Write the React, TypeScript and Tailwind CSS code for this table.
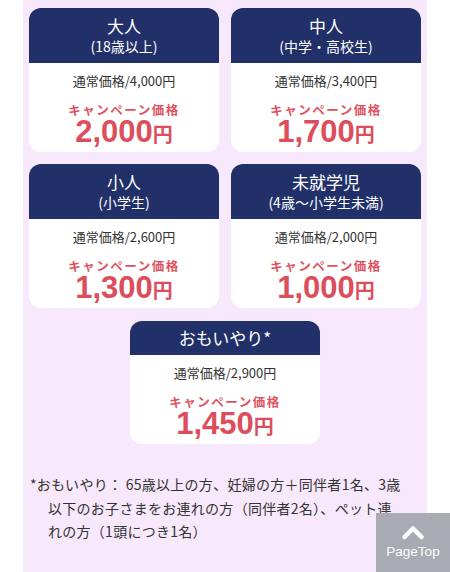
import React from "react"

type Price = {
    title: string
    sub?: string
    normal: string
    campaign: string
}

const prices: Price[] = [
    { title: "大人", sub: "(18歳以上)", normal: "通常価格/4,000円", campaign: "2,000" },
    { title: "中人", sub: "(中学・高校生)", normal: "通常価格/3,400円", campaign: "1,700" },
    { title: "小人", sub: "(小学生)", normal: "通常価格/2,600円", campaign: "1,300" },
    { title: "未就学児", sub: "(4歳〜小学生未満)", normal: "通常価格/2,000円", campaign: "1,000" },
]

const omoiyari: Price = { title: "おもいやり*", normal: "通常価格/2,900円", campaign: "1,450" }

function PriceCard({ p }: { p: Price }) {
    return (
        <div className="w-full overflow-hidden rounded-xl bg-white">
            {/* Header */}
            <div className={`flex flex-col items-center justify-center bg-[#22306a] text-white ${p.sub ? "h-[55px]" : "h-[34px]"}`}>
                <div className="text-[17px] leading-[22px]">{p.title}</div>
                {p.sub && <div className="text-[14px] leading-[19px]">{p.sub}</div>}
            </div>
            <div className="flex h-[89px] flex-col items-center pt-[9px]">
                <div className="text-[13px] leading-[18px] text-[#333]">{p.normal}</div>
                <div className="mt-[13px] text-[12.5px] font-bold leading-[14px] tracking-[0.12em] text-[#e05260]">
                    キャンペーン価格
                </div>
                <div className="flex items-baseline font-bold leading-[29px] text-[#dc4e5c]">
                    <span className="font-['Liberation_Sans','Noto_Sans_CJK_JP',sans-serif] text-[31px]">{p.campaign}</span>
                    <span className="text-[20px]">円</span>
                </div>
            </div>
        </div>
    )
}

export default function App() {
    return (
        <div className="relative h-[572px] w-[450px] overflow-hidden bg-white font-['Noto_Sans_CJK_JP','Noto_Sans',sans-serif]">
            <div className="mx-[23px] h-full bg-[#f8e8fb] px-[6px] pt-2">
                <div className="grid grid-cols-2 gap-3">
                    {prices.map((p) => (
                        <PriceCard key={p.title} p={p} />
                    ))}
                </div>
                <div className="mt-[13px] flex justify-center">
                    <div className="w-[190px]">
                        <PriceCard p={omoiyari} />
                    </div>
                </div>

                {/* Note */}
                <p className="mt-[29px] whitespace-nowrap pl-[19px] -indent-[18px] text-[14px] leading-[23.5px] tracking-[0.02em] text-[#333]">
                    *おもいやり： 65歳以上の方、妊婦の方＋同伴者1名、3歳
                    <br />
                    以下のお子さまをお連れの方（同伴者2名）、ペット連
                    <br />
                    れの方（1頭につき1名）
                </p>
            </div>

            {/* Page top button */}
            <button className="absolute bottom-0 right-0 flex h-[59px] w-[74px] flex-col items-center justify-center bg-[#a8abb1] text-white">
                <svg width="24" height="15" viewBox="0 0 24 15" fill="none">
                    <path d="M3.5 12 L12 3.5 L20.5 12" stroke="white" strokeWidth="4.5" strokeLinecap="round" strokeLinejoin="round" />
                </svg>
                <span className="mt-[4px] font-['Liberation_Sans',sans-serif] text-[13.5px] leading-[16px]">PageTop</span>
            </button>
        </div>
    )
}
